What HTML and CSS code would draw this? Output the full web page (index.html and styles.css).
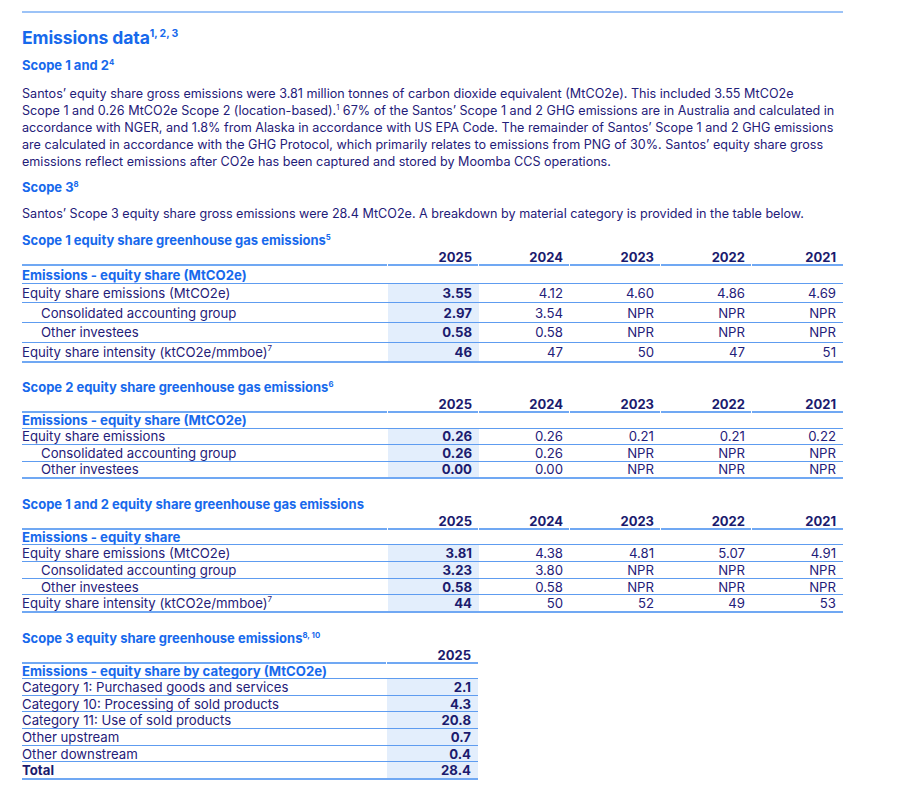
FILE: index.html
```html
<!DOCTYPE html>
<html lang="en">
<head>
<meta charset="utf-8">
<title>Emissions data</title>
<link rel="stylesheet" href="styles.css">
</head>
<body>
<main class="page">
  <div class="rule"></div>
  <h1 class="title">Emissions data<sup>1, 2, 3</sup></h1>
  <h2 class="subtitle">Scope 1 and 2<sup>4</sup></h2>
  <p class="para">Santos’ equity share gross emissions were 3.81 million tonnes of carbon dioxide equivalent (MtCO2e). This included 3.55 MtCO2e<br>Scope 1 and 0.26 MtCO2e Scope 2 (location-based).<sup>1</sup> 67% of the Santos’ Scope 1 and 2 GHG emissions are in Australia and calculated in<br>accordance with NGER, and 1.8% from Alaska in accordance with US EPA Code. The remainder of Santos’ Scope 1 and 2 GHG emissions<br>are calculated in accordance with the GHG Protocol, which primarily relates to emissions from PNG of 30%. Santos’ equity share gross<br>emissions reflect emissions after CO2e has been captured and stored by Moomba CCS operations.</p>
  <h2 class="subtitle s3">Scope 3<sup>8</sup></h2>
  <p class="para p2">Santos’ Scope 3 equity share gross emissions were 28.4 MtCO2e. A breakdown by material category is provided in the table below.</p>

  <h3 class="ttl t1">Scope 1 equity share greenhouse gas emissions<sup>5</sup></h3>
  <table class="data tall">
    <colgroup><col class="c-lab"><col class="c-num"><col class="c-num"><col class="c-num"><col class="c-num"><col class="c-num"></colgroup>
    <thead><tr><th></th><th>2025</th><th>2024</th><th>2023</th><th>2022</th><th>2021</th></tr></thead>
    <tbody>
      <tr class="grp"><td>Emissions - equity share (MtCO2e)</td><td class="cur"></td><td></td><td></td><td></td><td></td></tr>
      <tr><td>Equity share emissions (MtCO2e)</td><td class="cur">3.55</td><td>4.12</td><td>4.60</td><td>4.86</td><td>4.69</td></tr>
      <tr><td class="ind">Consolidated accounting group</td><td class="cur">2.97</td><td>3.54</td><td>NPR</td><td>NPR</td><td>NPR</td></tr>
      <tr><td class="ind">Other investees</td><td class="cur">0.58</td><td>0.58</td><td>NPR</td><td>NPR</td><td>NPR</td></tr>
      <tr class="last"><td>Equity share intensity (ktCO2e/mmboe)<sup>7</sup></td><td class="cur">46</td><td>47</td><td>50</td><td>47</td><td>51</td></tr>
    </tbody>
  </table>

  <h3 class="ttl">Scope 2 equity share greenhouse gas emissions<sup>6</sup></h3>
  <table class="data">
    <colgroup><col class="c-lab"><col class="c-num"><col class="c-num"><col class="c-num"><col class="c-num"><col class="c-num"></colgroup>
    <thead><tr><th></th><th>2025</th><th>2024</th><th>2023</th><th>2022</th><th>2021</th></tr></thead>
    <tbody>
      <tr class="grp"><td>Emissions - equity share (MtCO2e)</td><td class="cur"></td><td></td><td></td><td></td><td></td></tr>
      <tr><td>Equity share emissions</td><td class="cur">0.26</td><td>0.26</td><td>0.21</td><td>0.21</td><td>0.22</td></tr>
      <tr><td class="ind">Consolidated accounting group</td><td class="cur">0.26</td><td>0.26</td><td>NPR</td><td>NPR</td><td>NPR</td></tr>
      <tr class="last"><td class="ind">Other investees</td><td class="cur">0.00</td><td>0.00</td><td>NPR</td><td>NPR</td><td>NPR</td></tr>
    </tbody>
  </table>

  <h3 class="ttl t3">Scope 1 and 2 equity share greenhouse gas emissions</h3>
  <table class="data">
    <colgroup><col class="c-lab"><col class="c-num"><col class="c-num"><col class="c-num"><col class="c-num"><col class="c-num"></colgroup>
    <thead><tr><th></th><th>2025</th><th>2024</th><th>2023</th><th>2022</th><th>2021</th></tr></thead>
    <tbody>
      <tr class="grp"><td>Emissions - equity share</td><td class="cur"></td><td></td><td></td><td></td><td></td></tr>
      <tr><td>Equity share emissions (MtCO2e)</td><td class="cur">3.81</td><td>4.38</td><td>4.81</td><td>5.07</td><td>4.91</td></tr>
      <tr><td class="ind">Consolidated accounting group</td><td class="cur">3.23</td><td>3.80</td><td>NPR</td><td>NPR</td><td>NPR</td></tr>
      <tr><td class="ind">Other investees</td><td class="cur">0.58</td><td>0.58</td><td>NPR</td><td>NPR</td><td>NPR</td></tr>
      <tr class="last"><td>Equity share intensity (ktCO2e/mmboe)<sup>7</sup></td><td class="cur">44</td><td>50</td><td>52</td><td>49</td><td>53</td></tr>
    </tbody>
  </table>

  <h3 class="ttl t3">Scope 3 equity share greenhouse emissions<sup>8, 10</sup></h3>
  <table class="data narrow">
    <colgroup><col class="c-lab"><col class="c-num"></colgroup>
    <thead><tr><th></th><th>2025</th></tr></thead>
    <tbody>
      <tr class="grp"><td>Emissions - equity share by category (MtCO2e)</td><td class="cur"></td></tr>
      <tr><td>Category 1: Purchased goods and services</td><td class="cur">2.1</td></tr>
      <tr><td>Category 10: Processing of sold products</td><td class="cur">4.3</td></tr>
      <tr><td>Category 11: Use of sold products</td><td class="cur">20.8</td></tr>
      <tr><td>Other upstream</td><td class="cur">0.7</td></tr>
      <tr><td>Other downstream</td><td class="cur">0.4</td></tr>
      <tr class="last total"><td>Total</td><td class="cur">28.4</td></tr>
    </tbody>
  </table>
</main>
</body>
</html>
```

FILE: styles.css
```css
* { box-sizing: border-box; }
html, body { margin: 0; padding: 0; background: #ffffff; }
body {
  font-family: Inter, "Open Sans", "DejaVu Sans", sans-serif;
  color: #1f2079;
}
.page {
  width: 821px;
  margin-left: 22px;
  padding-top: 11px;
}
.rule {
  height: 2px;
  background: #9cc3f7;
}
sup {
  font-size: 0.6em;
  line-height: 0;
  vertical-align: 0.7em;
}
.title {
  margin: 15px 0 0;
  font-size: 17.5px;
  line-height: 20px;
  font-weight: 700;
  color: #1769ec;
  letter-spacing: -0.1px;
}
.subtitle {
  margin: 9px 0 0;
  font-size: 13px;
  line-height: 16px;
  font-weight: 700;
  color: #1769ec;
}
.para {
  margin: 12px 0 0;
  font-size: 12.6px;
  line-height: 17px;
  white-space: nowrap;
}
.para.p2 { margin-top: 10px; }
.ttl {
  margin: 16px 0 0;
  font-size: 13px;
  line-height: 16px;
  font-weight: 700;
  color: #1769ec;
}
.ttl.t1 { margin-top: 10px; }
.ttl.t3 { margin-top: 17px; }

.data {
  width: 821px;
  border-collapse: collapse;
  font-size: 13.2px;
}
.data.narrow { width: 456px; }
.c-lab { width: 366px; }
.c-num { width: 91px; }
.data th {
  height: 18px;
  padding: 2px 7px 2px 0;
  text-align: right;
  font-weight: 700;
  font-size: 13px;
  line-height: 14px;
  color: #1b1b6e;
  vertical-align: middle;
  background: linear-gradient(#70a8f3, #70a8f3) left bottom / calc(100% - 1px) 2px no-repeat;
}
.data th:last-child {
  background-size: 100% 2px;
}
.data td {
  height: 16.67px;
  padding: 0 7px 0 0;
  line-height: 14px;
  text-align: right;
  border-bottom: 1px solid #5e9cf0;
  vertical-align: middle;
  white-space: nowrap;
}
.data td:first-child {
  text-align: left;
  padding-left: 0;
}
.data td.ind { padding-left: 19px; }
.data td.cur {
  background: #e3eefc;
  font-weight: 700;
  color: #1b1b6e;
}
.data tr.grp td {
  height: 15px;
  background: transparent;
}
.data tr.grp td:first-child {
  font-weight: 700;
  color: #1769ec;
}
.data tr.last td { border-bottom: 2px solid #70a8f3; }
.data tr.total td:first-child { font-weight: 700; color: #1b1b6e; }
.data.tall tr.grp td { height: 17px; vertical-align: bottom; line-height: 15px; }
.data.tall tbody tr:not(.grp) td { height: 19.75px; }
```
